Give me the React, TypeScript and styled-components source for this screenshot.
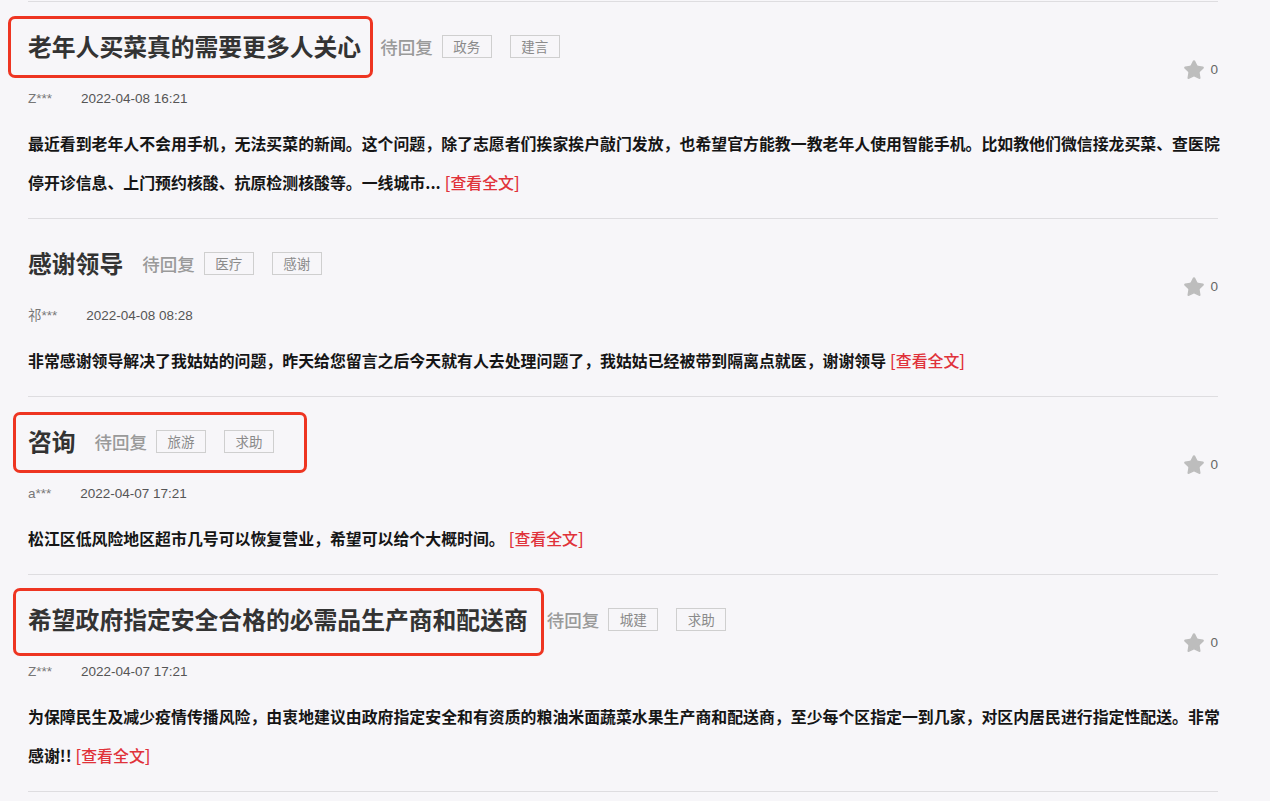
import React from "react";
import styled, { createGlobalStyle } from "styled-components";
import { Star } from "lucide-react";

const GlobalStyle = createGlobalStyle`
  html, body {
    margin: 0;
    padding: 0;
    background: #f7f6f9;
  }
  body {
    font-family: "Liberation Sans", "Noto Sans CJK SC", sans-serif;
  }
`;

const Page = styled.div`
  padding: 1px 52px 0 28px;
  min-height: 801px;
  box-sizing: border-box;
`;

const List = styled.div`
  border-top: 1px solid #dedde0;
  width: 1190px;
`;

const Item = styled.div`
  position: relative;
  padding: 24px 0 16px;
  border-bottom: 1px solid #dedde0;
`;

const Header = styled.div`
  display: flex;
  align-items: center;
  justify-content: space-between;
`;

const HeadLeft = styled.div`
  display: flex;
  flex-direction: column;
`;

const TitleRow = styled.div`
  display: flex;
  align-items: center;
  height: 40px;
`;

const Title = styled.h3`
  margin: 0;
  font-family: "Noto Sans CJK SC", sans-serif;
  font-size: 23.8px;
  font-weight: 700;
  color: #333;
  line-height: 40px;
`;

const Status = styled.span`
  margin-left: 19px;
  font-family: "Noto Sans CJK SC", sans-serif;
  font-size: 17.5px;
  font-weight: 500;
  color: #9a9a9a;
`;

const Tags = styled.div`
  display: flex;
  gap: 18px;
  margin-left: 9px;
`;

const Tag = styled.span`
  display: inline-flex;
  align-items: center;
  justify-content: center;
  width: 50px;
  height: 23px;
  border: 1px solid #cfcfcf;
  box-sizing: border-box;
  font-family: "Noto Sans CJK SC", sans-serif;
  font-size: 13.5px;
  color: #8a8a8a;
`;

const Meta = styled.div`
  display: flex;
  margin-top: 23px;
  line-height: 20px;
  font-size: 13.5px;
  color: #555;
`;

const Author = styled.span`
  margin-right: 29px;
  color: #777;
`;

const Likes = styled.div`
  display: flex;
  align-items: center;
  gap: 5px;
  margin-top: 4px;
  font-size: 13.5px;
  color: #666;
`;

const Body = styled.div`
  margin-top: 15px;
  font-family: "Noto Sans CJK SC", sans-serif;
  font-size: 15.9px;
  font-weight: 700;
  line-height: 39px;
  color: #151515;
  text-align: justify;
`;

const Line = styled.span<{ $full?: boolean }>`
  display: block;
  white-space: nowrap;
  text-align-last: ${(p) => (p.$full ? "justify" : "auto")};
`;

const More = styled.a`
  margin-left: 4px;
  font-weight: 500;
  color: #e0323a;
  text-decoration: none;
`;

const Highlight = styled.div<{ $l: number; $t: number; $w: number; $h: number }>`
  position: absolute;
  left: ${(p) => p.$l}px;
  top: ${(p) => p.$t}px;
  width: ${(p) => p.$w}px;
  height: ${(p) => p.$h}px;
  border: 3px solid #ee3522;
  border-radius: 7px;
  box-sizing: border-box;
  pointer-events: none;
`;

type Post = {
  title: string;
  tags: string[];
  author: string;
  time: string;
  lines: string[];
  box?: { l: number; t: number; w: number; h: number };
};

const posts: Post[] = [
  {
    title: "老年人买菜真的需要更多人关心",
    tags: ["政务", "建言"],
    author: "Z***",
    time: "2022-04-08 16:21",
    lines: [
      "最近看到老年人不会用手机，无法买菜的新闻。这个问题，除了志愿者们挨家挨户敲门发放，也希望官方能教一教老年人使用智能手机。比如教他们微信接龙买菜、查医院",
      "停开诊信息、上门预约核酸、抗原检测核酸等。一线城市...",
    ],
    box: { l: -20, t: 14, w: 365, h: 62 },
  },
  {
    title: "感谢领导",
    tags: ["医疗", "感谢"],
    author: "祁***",
    time: "2022-04-08 08:28",
    lines: [
      "非常感谢领导解决了我姑姑的问题，昨天给您留言之后今天就有人去处理问题了，我姑姑已经被带到隔离点就医，谢谢领导",
    ],
  },
  {
    title: "咨询",
    tags: ["旅游", "求助"],
    author: "a***",
    time: "2022-04-07 17:21",
    lines: ["松江区低风险地区超市几号可以恢复营业，希望可以给个大概时间。"],
    box: { l: -15, t: 15, w: 294, h: 61 },
  },
  {
    title: "希望政府指定安全合格的必需品生产商和配送商",
    tags: ["城建", "求助"],
    author: "Z***",
    time: "2022-04-07 17:21",
    lines: [
      "为保障民生及减少疫情传播风险，由衷地建议由政府指定安全和有资质的粮油米面蔬菜水果生产商和配送商，至少每个区指定一到几家，对区内居民进行指定性配送。非常",
      "感谢!!",
    ],
    box: { l: -15, t: 13, w: 531, h: 68 },
  },
];

function PostItem({ post }: { post: Post }) {
  const last = post.lines.length - 1;
  return (
    <Item>
      <Header>
        <HeadLeft>
          <TitleRow>
            <Title>{post.title}</Title>
            <Status>待回复</Status>
            <Tags>
              {post.tags.map((t) => (
                <Tag key={t}>{t}</Tag>
              ))}
            </Tags>
          </TitleRow>
          <Meta>
            <Author>{post.author}</Author>
            <span>{post.time}</span>
          </Meta>
        </HeadLeft>
        <Likes>
          <Star size={22} fill="#bdbdbd" color="#bdbdbd" strokeWidth={1.5} strokeLinejoin="round" />
          0
        </Likes>
      </Header>
      <Body>
        {post.lines.map((line, i) => (
          <Line key={i} $full={i < last}>
            {line}
            {i === last && <More href="#">[查看全文]</More>}
          </Line>
        ))}
      </Body>
      {post.box && <Highlight $l={post.box.l} $t={post.box.t} $w={post.box.w} $h={post.box.h} />}
    </Item>
  );
}

export default function App() {
  return (
    <>
      <GlobalStyle />
      <Page>
        <List>
          {posts.map((p, i) => (
            <PostItem key={i} post={p} />
          ))}
        </List>
      </Page>
    </>
  );
}
